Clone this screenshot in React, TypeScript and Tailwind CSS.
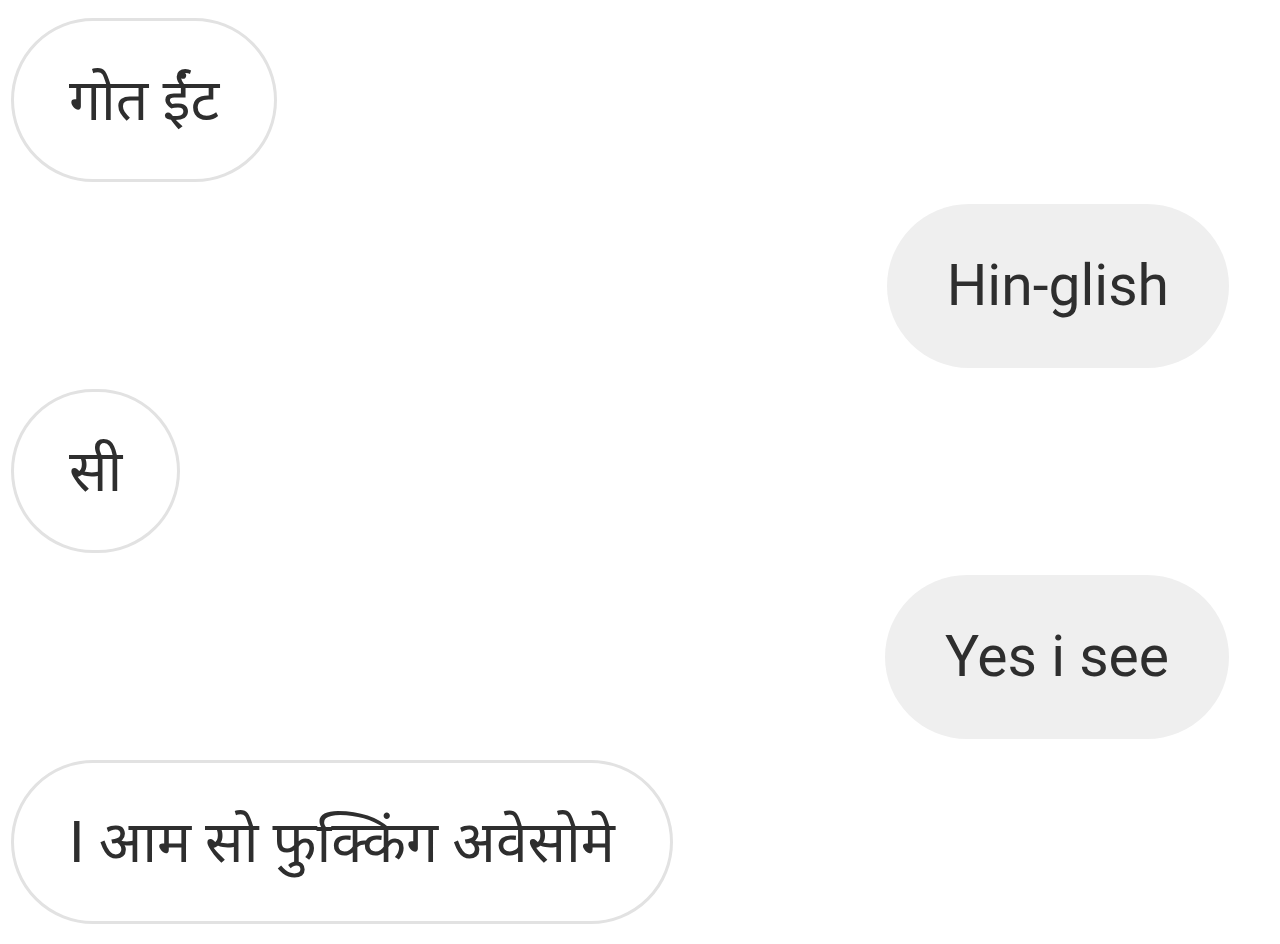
import React from 'react';

type Msg = { text: string; mine: boolean };

const messages: Msg[] = [
  { text: 'गोत ईंट', mine: false },
  { text: 'Hin-glish', mine: true },
  { text: 'सी', mine: false },
  { text: 'Yes i see', mine: true },
  { text: 'I आम सो फुक्किंग अवेसोमे', mine: false },
];

const Bubble: React.FC<{ msg: Msg }> = ({ msg }) => {
  if (msg.mine) {
    return (
      <div className="self-end h-[164px] min-w-[164px] px-[60px] rounded-full bg-[#efefef] flex items-center justify-center">
        <span>{msg.text}</span>
      </div>
    );
  }
  return (
    <div className="self-start h-[164px] min-w-[168px] px-[55px] rounded-full bg-white border-[3px] border-[#e2e2e2] flex items-center justify-center">
      <span>{msg.text}</span>
    </div>
  );
};

export default function App() {
  return (
    <div
      className="w-[1280px] h-[944px] bg-white overflow-hidden flex flex-col gap-[21.5px] pt-[18px] pl-[11px] pr-[51px] text-[57px] leading-none text-[#2e2e2e]"
      style={{ fontFamily: 'Roboto, "Noto Sans", sans-serif' }}
    >
      {messages.map((m, i) => (
        <Bubble key={i} msg={m} />
      ))}
    </div>
  );
}
